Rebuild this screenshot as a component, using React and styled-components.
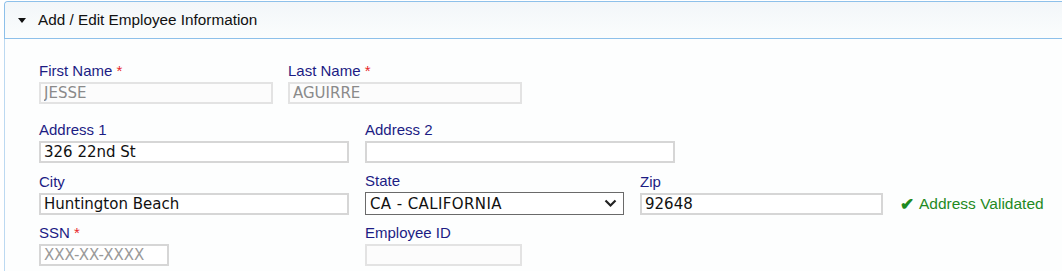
import React from 'react'
import styled, { createGlobalStyle } from 'styled-components'

const GlobalStyle = createGlobalStyle`
    html, body {
        margin: 0;
        padding: 0;
        background: #ffffff;
        overflow: hidden;
    }
`

function Field({ label, required, width, children }) {
    return (
        <FieldBox $width={width}>
            <Label>
                {label}
                {required && <Star> *</Star>}
            </Label>
            {children}
        </FieldBox>
    )
}

function App() {
    return (
        <>
            <GlobalStyle />
            <Panel>
                <Header>
                    <Caret />
                    Add / Edit Employee Information
                </Header>
                <Body>
                    <Row $gap={17}>
                        <Field label="First Name" required width={249}>
                            <Input $width={234} value="JESSE" disabled readOnly />
                        </Field>
                        <Field label="Last Name" required width={249}>
                            <Input $width={234} value="AGUIRRE" disabled readOnly />
                        </Field>
                    </Row>
                    <Row $gap={9}>
                        <Field label="Address 1" width={326}>
                            <Input $width={310} value="326 22nd St" readOnly />
                        </Field>
                        <Field label="Address 2" width={326}>
                            <Input $width={310} value="" readOnly />
                        </Field>
                    </Row>
                    <Row $gap={9}>
                        <Field label="City" width={326}>
                            <Input $width={310} value="Huntington Beach" readOnly />
                        </Field>
                        <Field label="State" width={275}>
                            <SelectBox>
                                <span>CA - CALIFORNIA</span>
                                <svg width="13" height="9" viewBox="0 0 13 9">
                                    <path d="M1.5 1.5 L6.5 6.5 L11.5 1.5" fill="none" stroke="#222" strokeWidth="2.2" />
                                </svg>
                            </SelectBox>
                        </Field>
                        <Field label="Zip" width={260}>
                            <Input $width={243} value="92648" readOnly />
                        </Field>
                        <Validated><Check>✔</Check> Address Validated</Validated>
                    </Row>
                    <Row $gap={9}>
                        <Field label="SSN" required width={326}>
                            <Input $width={130} placeholder="XXX-XX-XXXX" readOnly />
                        </Field>
                        <Field label="Employee ID" width={326}>
                            <Input $width={157} value="" disabled readOnly />
                        </Field>
                    </Row>
                </Body>
            </Panel>
        </>
    )
}

const Panel = styled.div`
    margin: 1px 0 0 4px;
    width: 1080px;
    border: 1px solid #8dc0ea;
    border-bottom: none;
    border-radius: 4px 4px 0 0;
    background: #fdfefe;
    font-family: "Liberation Sans", Arial, sans-serif;
`

const Header = styled.div`
    display: flex;
    align-items: center;
    height: 36px;
    padding-left: 13px;
    border-bottom: 1px solid #8dc0ea;
    background: linear-gradient(#f2f6f9, #fbfdfd);
    border-radius: 4px 4px 0 0;
    font-size: 15.3px;
    color: #111;
`

const Caret = styled.span`
    width: 0;
    height: 0;
    margin-right: 12px;
    border-left: 4px solid transparent;
    border-right: 4px solid transparent;
    border-top: 5px solid #111;
`

const Body = styled.div`
    padding: 23px 0 10px 34px;
    border-left: 1px solid #bcd9f1;
    margin-left: -1px;
    background: #fdfefe;
`

const Row = styled.div`
    display: flex;
    align-items: flex-end;
    margin-bottom: ${(p) => p.$gap}px;
`

const FieldBox = styled.div`
    width: ${(p) => p.$width}px;
    display: flex;
    flex-direction: column;
`

const Label = styled.label`
    font-size: 15px;
    line-height: 18px;
    margin-bottom: 2px;
    color: #1c1c84;
`

const Star = styled.span`
    color: #e8262a;
`

const Input = styled.input`
    box-sizing: border-box;
    width: ${(p) => p.$width}px;
    height: 22px;
    padding: 0 3px;
    border: 2px solid #d6d6d6;
    background: #ffffff;
    font-family: "DejaVu Sans", Verdana, sans-serif;
    font-size: 15px;
    color: #111;
    outline: none;

    &:disabled {
        border-color: #e3e3e3;
        background: #fcfcfc;
        color: #8a8a8a;
    }

    &::placeholder {
        color: #9a9a9a;
    }
`

const SelectBox = styled.div`
    box-sizing: border-box;
    width: 259px;
    height: 23px;
    display: flex;
    align-items: center;
    justify-content: space-between;
    padding: 0 6px 0 4px;
    border: 1px solid #6a6a6a;
    background: #fff;
    font-family: "DejaVu Sans", Verdana, sans-serif;
    font-size: 15px;
    letter-spacing: 0.4px;
    color: #111;
`

const Validated = styled.div`
    height: 22px;
    display: flex;
    align-items: center;
    gap: 5px;
    font-size: 15.5px;
    color: #1f8a1f;
`

const Check = styled.span`
    font-size: 17px;
    font-weight: bold;
`

export default App
